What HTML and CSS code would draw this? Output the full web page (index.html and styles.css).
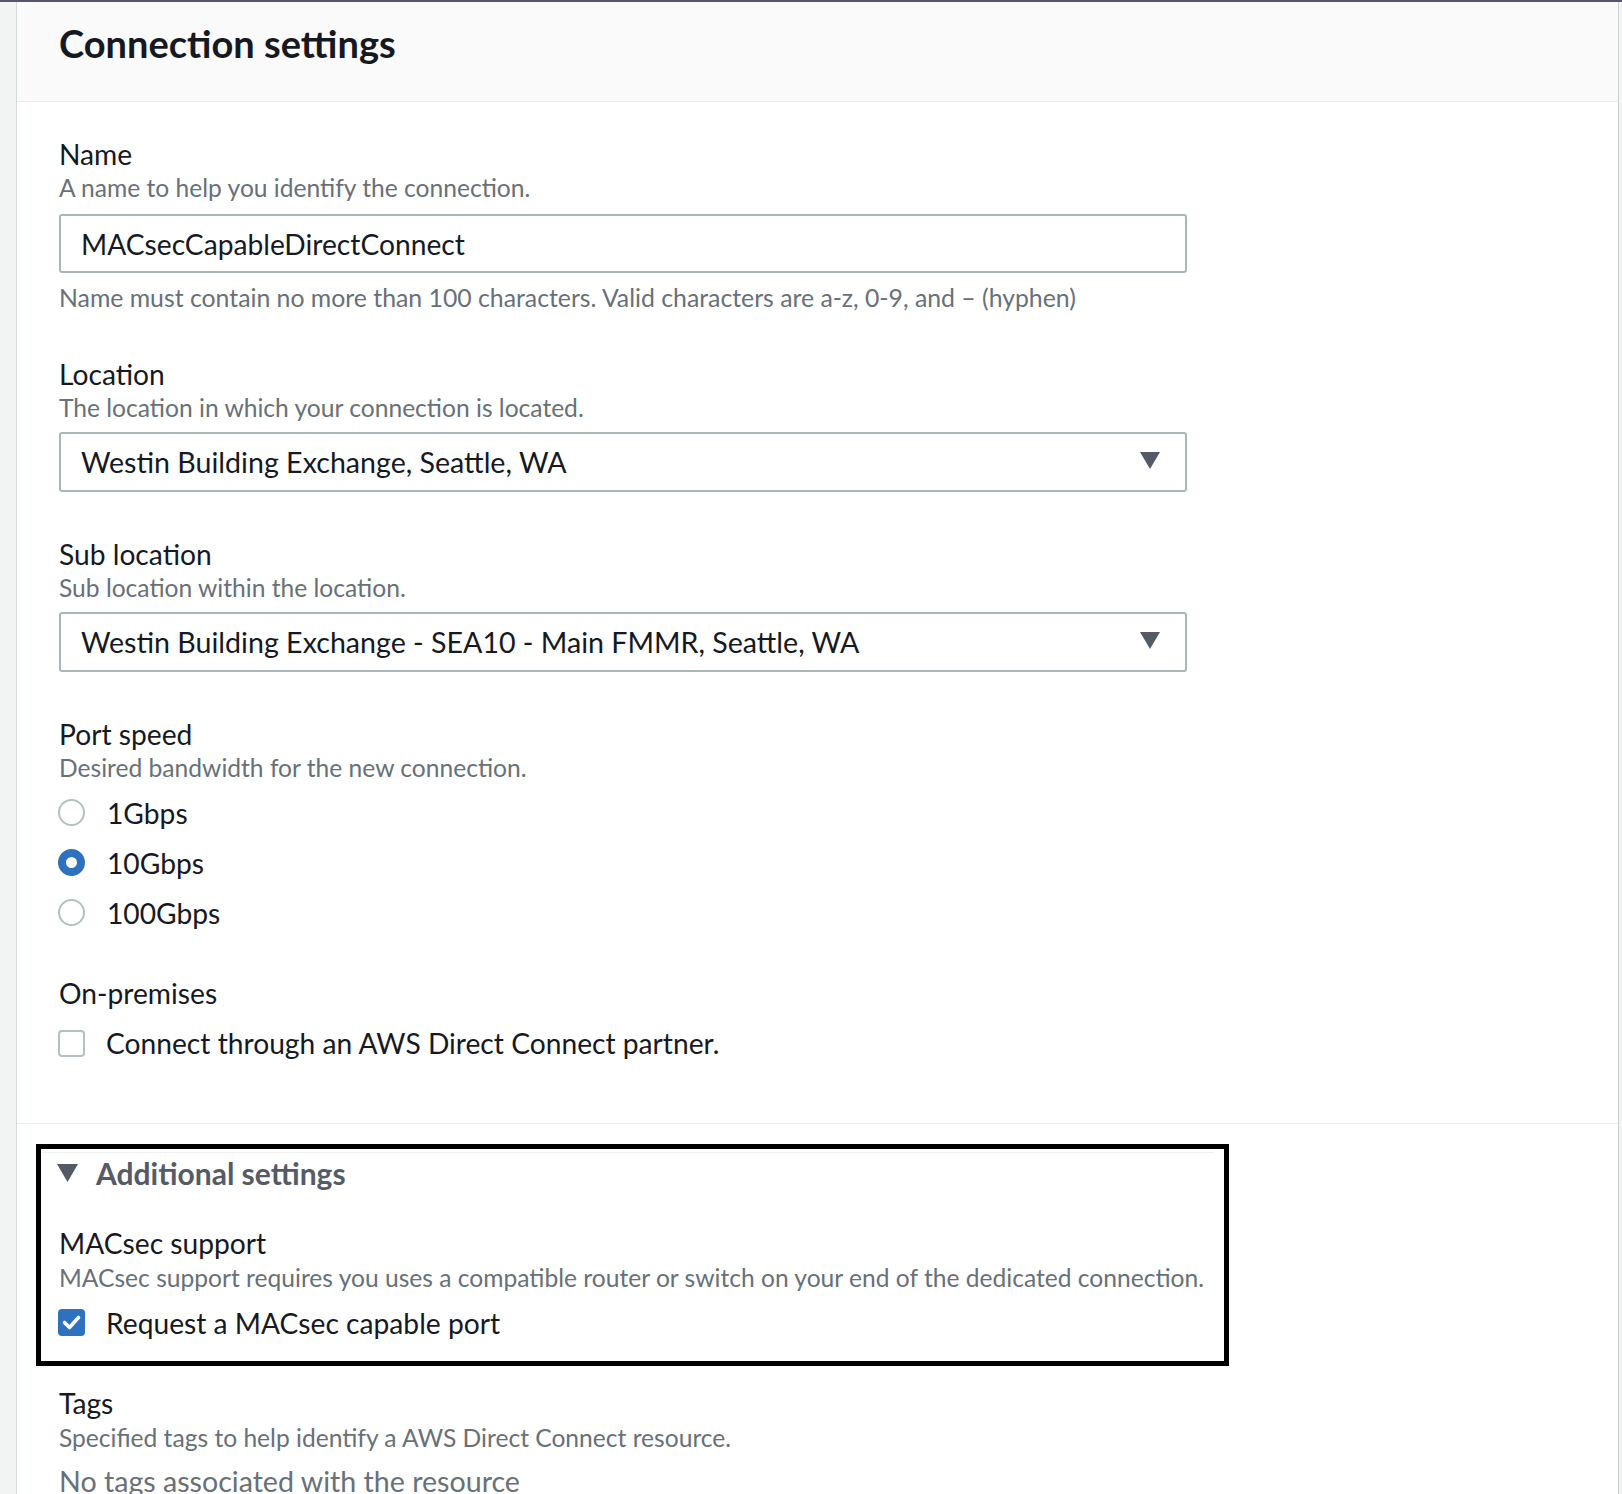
FILE: index.html
```html
<!DOCTYPE html>
<html lang="en">
<head>
<meta charset="utf-8">
<title>Connection settings</title>
<link rel="stylesheet" href="styles.css">
</head>
<body>
<div class="page">
  <div class="panel">
    <header class="panel-header">
      <h2 class="panel-title">Connection settings</h2>
    </header>

    <div class="panel-body">
      <div class="field field-name">
        <div class="label">Name</div>
        <div class="desc">A name to help you identify the connection.</div>
        <div class="input input-name">MACsecCapableDirectConnect</div>
        <div class="constraint">Name must contain no more than 100 characters. Valid characters are a-z, 0-9, and – (hyphen)</div>
      </div>

      <div class="field field-gap-a">
        <div class="label">Location</div>
        <div class="desc">The location in which your connection is located.</div>
        <div class="input select">
          <span>Westin Building Exchange, Seattle, WA</span>
          <svg class="caret" width="20" height="17" viewBox="0 0 20 17"><path d="M0 0 H20 L10 17 Z" fill="#545b64"/></svg>
        </div>
      </div>

      <div class="field field-gap-b">
        <div class="label">Sub location</div>
        <div class="desc">Sub location within the location.</div>
        <div class="input select">
          <span>Westin Building Exchange - SEA10 - Main FMMR, Seattle, WA</span>
          <svg class="caret" width="20" height="17" viewBox="0 0 20 17"><path d="M0 0 H20 L10 17 Z" fill="#545b64"/></svg>
        </div>
      </div>

      <div class="field field-gap-b">
        <div class="label">Port speed</div>
        <div class="desc">Desired bandwidth for the new connection.</div>
        <div class="options">
          <div class="option"><span class="radio"></span><span class="option-text">1Gbps</span></div>
          <div class="option"><span class="radio radio-on"></span><span class="option-text">10Gbps</span></div>
          <div class="option"><span class="radio"></span><span class="option-text">100Gbps</span></div>
        </div>
      </div>

      <div class="field field-gap-c">
        <div class="label">On-premises</div>
        <div class="option option-check">
          <span class="checkbox"></span><span class="option-text">Connect through an AWS Direct Connect partner.</span>
        </div>
      </div>
    </div>

    <div class="panel-section">
      <div class="highlight">
        <div class="expander-head">
          <svg class="expander-caret" width="21" height="18" viewBox="0 0 21 18"><path d="M0 0 H21 L10.5 18 Z" fill="#545b64"/></svg>
          <span class="expander-title">Additional settings</span>
        </div>
        <div class="field field-macsec">
          <div class="label">MACsec support</div>
          <div class="desc desc-macsec">MACsec support requires you uses a compatible router or switch on your end of the dedicated connection.</div>
          <div class="option option-macsec">
            <span class="checkbox checkbox-on">
              <svg width="27" height="27" viewBox="0 0 27 27"><path d="M6.5 13.5 L11.5 18.5 L20.5 8.5" fill="none" stroke="#fff" stroke-width="3.6" stroke-linecap="round" stroke-linejoin="round"/></svg>
            </span>
            <span class="option-text">Request a MACsec capable port</span>
          </div>
        </div>
      </div>

      <div class="field field-tags">
        <div class="label">Tags</div>
        <div class="desc desc-tags">Specified tags to help identify a AWS Direct Connect resource.</div>
        <div class="empty">No tags associated with the resource</div>
      </div>
    </div>
  </div>
</div>
</body>
</html>
```
FILE: styles.css
```css
html, body {
  margin: 0;
  padding: 0;
  height: 1494px;
  overflow: hidden;
}

body {
  background: #f2f3f3;
  border-top: 2px solid #57556a;
  box-sizing: border-box;
  font-family: Lato, "Noto Sans", sans-serif;
  color: #16191f;
}

.page {
  padding: 0 3px 0 16px;
  height: 100%;
}

.panel {
  background: #ffffff;
  border-left: 1px solid #d5dbdb;
  border-right: 1px solid #c9cfcf;
  height: 100%;
}

.panel-header {
  background: #fafafa;
  border-bottom: 1px solid #eaeded;
  padding: 18px 0 35px 42px;
}

.panel-title {
  margin: 0;
  font-size: 38px;
  line-height: 46px;
  font-weight: 700;
  color: #16191f;
}

.panel-body {
  padding: 35px 0 55px 42px;
}

.label {
  font-size: 28.2px;
  line-height: 34px;
  color: #16191f;
}

.desc {
  font-size: 24.6px;
  line-height: 30px;
  color: #687078;
  margin-top: 2px;
}

.input {
  box-sizing: border-box;
  width: 1128px;
  height: 59px;
  margin-top: 12px;
  border: 2px solid #aab7b8;
  border-radius: 3px;
  background: #fff;
  padding: 0 25px 0 20px;
  font-size: 28.2px;
  color: #16191f;
  display: flex;
  align-items: center;
  justify-content: space-between;
}

.input-name {
  margin-top: 11px;
}

.select {
  margin-top: 9.5px;
  height: 60px;
  font-size: 28.6px;
}

.caret {
  flex: none;
  margin-top: -3px;
}

.constraint {
  font-size: 24.8px;
  line-height: 30px;
  color: #687078;
  margin-top: 10px;
}

.field-gap-a {
  margin-top: 43.5px;
}

.field-gap-b {
  margin-top: 44.9px;
}

.field-gap-c {
  margin-top: 38px;
}

.options {
  margin-top: 4.4px;
  display: flex;
  flex-direction: column;
}

.option {
  display: flex;
  align-items: center;
  height: 50px;
}

.option-check {
  margin-top: 8.7px;
}

.option-text {
  font-size: 28.2px;
  line-height: 34px;
  color: #16191f;
}

.radio {
  box-sizing: border-box;
  width: 27px;
  height: 27px;
  border-radius: 50%;
  border: 2px solid #b4c0c1;
  background: #fff;
  margin-left: -1px;
  margin-right: 22px;
  flex: none;
}

.radio-on {
  border: 8px solid #2e72bf;
}

.checkbox {
  box-sizing: border-box;
  width: 27px;
  height: 27px;
  border-radius: 4px;
  border: 2px solid #b4c0c1;
  background: #fff;
  margin-left: -1px;
  margin-right: 21px;
  flex: none;
  display: flex;
}

.checkbox-on {
  border: none;
  background: #2e72bf;
}

.panel-section {
  border-top: 1px solid #eaeded;
  padding-left: 19px;
}

.highlight {
  box-sizing: border-box;
  width: 1193px;
  margin-top: 20px;
  border: 5px solid #000;
  padding: 3px 10px 13px 0;
}

.expander-head {
  border-top: 1px solid #f0f2f2;
  height: 40px;
  display: flex;
  align-items: center;
  padding-left: 16px;
}

.expander-caret {
  flex: none;
  margin-right: 18px;
}

.expander-title {
  font-size: 30px;
  font-weight: 700;
  line-height: 40px;
  color: #545b64;
}

.field-macsec {
  padding-left: 18px;
  margin-top: 33px;
}

.desc-macsec {
  margin-top: 3px;
}

.option-macsec {
  margin-top: 4.5px;
}

.field-tags {
  padding-left: 23px;
  margin-top: 19.7px;
}

.desc-tags {
  margin-top: 3px;
}

.empty {
  margin-top: 11.5px;
  font-size: 28.6px;
  line-height: 34px;
  color: #687078;
}
```
